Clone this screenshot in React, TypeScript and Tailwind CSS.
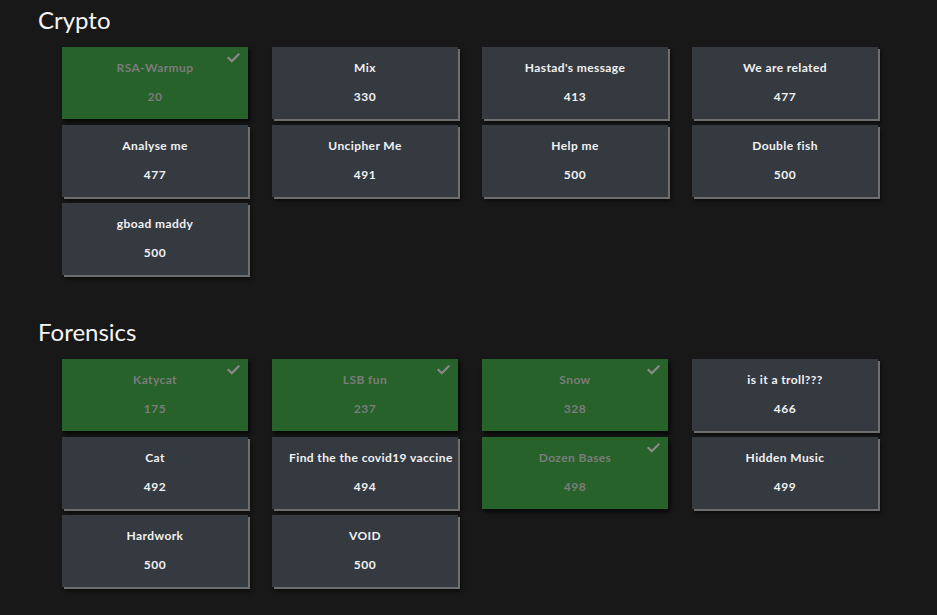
import React from "react";

type Ch = { name: string; pts: number; solved?: boolean };

const crypto: Ch[] = [
  { name: "RSA-Warmup", pts: 20, solved: true },
  { name: "Mix", pts: 330 },
  { name: "Hastad's message", pts: 413 },
  { name: "We are related", pts: 477 },
  { name: "Analyse me", pts: 477 },
  { name: "Uncipher Me", pts: 491 },
  { name: "Help me", pts: 500 },
  { name: "Double fish", pts: 500 },
  { name: "gboad maddy", pts: 500 },
];

const forensics: Ch[] = [
  { name: "Katycat", pts: 175, solved: true },
  { name: "LSB fun", pts: 237, solved: true },
  { name: "Snow", pts: 328, solved: true },
  { name: "is it a troll???", pts: 466 },
  { name: "Cat", pts: 492 },
  { name: "Find the the covid19 vaccine", pts: 494 },
  { name: "Dozen Bases", pts: 498, solved: true },
  { name: "Hidden Music", pts: 499 },
  { name: "Hardwork", pts: 500 },
  { name: "VOID", pts: 500 },
];

function Check() {
  return (
    <svg width="13" height="10" viewBox="0 0 13 10" className="absolute top-[6px] right-[8px]">
      <path d="M1.5 5 L4.8 8.2 L11.5 1.5" fill="none" stroke="#8a8a8a" strokeWidth="2.2" strokeLinecap="square" />
    </svg>
  );
}

function Card({ c }: { c: Ch }) {
  return (
    <div
      className={
        c.solved
          ? "relative h-[72px] w-[186px] bg-[#26622a] shadow-[2px_3px_4px_rgba(0,0,0,0.75)] text-center pt-[13px] px-[17px]"
          : "relative h-[72px] w-[186px] bg-[#353a41] shadow-[2px_2px_0_#6e6e6e,3px_4px_4px_rgba(0,0,0,0.6)] text-center pt-[13px] px-[17px]"
      }
    >
      {c.solved && <Check />}
      <div
        className={
          (c.solved ? "text-[#7c7c7c]" : "text-[#f1f1f1]") +
          " text-[12px] font-bold leading-[16px] tracking-[0.4px] whitespace-nowrap"
        }
      >
        {c.name}
      </div>
      <div
        className={
          (c.solved ? "text-[#7c7c7c]" : "text-[#f1f1f1]") +
          " text-[12px] font-bold leading-[16px] tracking-[0.6px] mt-[13px]"
        }
      >
        {c.pts}
      </div>
    </div>
  );
}

function Section({ title, items }: { title: string; items: Ch[] }) {
  return (
    <div>
      <h2 className="text-[24px] leading-[30px] text-[#f4f4f4] pl-[38px] pt-[5px]">{title}</h2>
      <div className="grid grid-cols-[repeat(4,186px)] gap-x-[24px] gap-y-[6px] pl-[62px] mt-[12px]">
        {items.map((c, i) => (
          <Card key={i} c={c} />
        ))}
      </div>
    </div>
  );
}

export default function App() {
  return (
    <div
      className="w-[937px] h-[615px] overflow-hidden bg-[#181818]"
      style={{ fontFamily: "Lato, 'Open Sans', sans-serif" }}
    >
      <Section title="Crypto" items={crypto} />
      <div className="h-[37px]" />
      <Section title="Forensics" items={forensics} />
    </div>
  );
}
